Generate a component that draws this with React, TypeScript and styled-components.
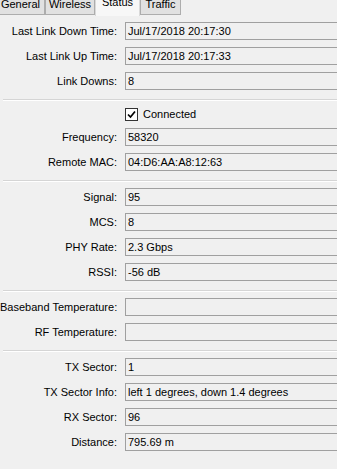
import React from 'react';
import styled, { createGlobalStyle } from 'styled-components';

const GlobalStyle = createGlobalStyle`
  body {
    margin: 0;
    background: #f0f0f0;
  }
`;

const Window = styled.div`
  width: 337px;
  height: 469px;
  overflow: hidden;
  background: #f0f0f0;
  font-family: "Liberation Sans", Arial, sans-serif;
  font-size: 11px;
  color: #000;
`;

const TabStrip = styled.div`
  display: flex;
  align-items: flex-end;
  height: 21px;
  margin: -6px 0 0 -4px;
`;

const Tab = styled.div<{ $w: number; $active?: boolean }>`
  box-sizing: border-box;
  flex: none;
  width: ${(p) => p.$w}px;
  height: ${(p) => (p.$active ? 24 : 21)}px;
  margin-bottom: ${(p) => (p.$active ? -1 : 0)}px;
  line-height: ${(p) => (p.$active ? 18 : 19)}px;
  text-align: center;
  white-space: nowrap;
  background: ${(p) => (p.$active ? '#f7f7f7' : '#e1e1e1')};
  border: 1px solid ${(p) => (p.$active ? '#d9d9d9' : '#adadad')};
  border-bottom: ${(p) => (p.$active ? 'none' : '1px solid #adadad')};
`;

const Panel = styled.div`
  padding-top: 7px;
`;

const Section = styled.div`
  display: flex;
  flex-direction: column;
  gap: 7px;
`;

const Separator = styled.div`
  margin: 9px 0 6px 3px;
  border-top: 1px solid #d5d5d5;
  border-bottom: 1px solid #fff;
`;

const Row = styled.div`
  display: flex;
  align-items: center;
  height: 18px;
`;

const Label = styled.div`
  flex: none;
  width: 117px;
  text-align: right;
  white-space: nowrap;
`;

const Field = styled.div`
  box-sizing: border-box;
  flex: 1;
  height: 18px;
  margin: 0 -20px 0 8px;
  padding-left: 2px;
  line-height: 16px;
  white-space: nowrap;
  border: 1px solid #a0a0a0;
  border-right: none;
`;

const CheckRow = styled.div`
  display: flex;
  align-items: flex-end;
  gap: 5px;
  height: 14px;
  padding-left: 125px;
  line-height: 13px;
`;

const CheckBox = styled.div`
  box-sizing: border-box;
  width: 13px;
  height: 13px;
  background: #fff;
  border: 1px solid #333;
  display: flex;
  align-items: center;
  justify-content: center;
`;

type Item = [string, string];

const sections: Item[][] = [
  [
    ['Last Link Down Time:', 'Jul/17/2018 20:17:30'],
    ['Last Link Up Time:', 'Jul/17/2018 20:17:33'],
    ['Link Downs:', '8'],
  ],
  [
    ['Frequency:', '58320'],
    ['Remote MAC:', '04:D6:AA:A8:12:63'],
  ],
  [
    ['Signal:', '95'],
    ['MCS:', '8'],
    ['PHY Rate:', '2.3 Gbps'],
    ['RSSI:', '-56 dB'],
  ],
  [
    ['Baseband Temperature:', ''],
    ['RF Temperature:', ''],
  ],
  [
    ['TX Sector:', '1'],
    ['TX Sector Info:', 'left 1 degrees, down 1.4 degrees'],
    ['RX Sector:', '96'],
    ['Distance:', '795.69 m'],
  ],
];

const tabs: [string, number][] = [
  ['General', 49],
  ['Wireless', 50],
  ['Status', 45],
  ['Traffic', 41],
];

const renderRows = (items: Item[]) =>
  items.map(([label, value]) => (
    <Row key={label}>
      <Label>{label}</Label>
      <Field>{value}</Field>
    </Row>
  ));

export default function App() {
  return (
    <Window>
      <GlobalStyle />
      <TabStrip>
        {tabs.map(([name, w]) => (
          <Tab key={name} $w={w} $active={name === 'Status'}>
            {name}
          </Tab>
        ))}
      </TabStrip>
      <Panel>
        {sections.map((items, i) => (
          <React.Fragment key={i}>
            {i > 0 && <Separator />}
            <Section>
              {i === 1 && (
                <CheckRow>
                  <CheckBox>
                    <svg width="9" height="9" viewBox="0 0 9 9">
                      <path d="M1 4.5 L3.5 7 L8 1.5" fill="none" stroke="#000" strokeWidth="1.7" />
                    </svg>
                  </CheckBox>
                  <span>Connected</span>
                </CheckRow>
              )}
              {renderRows(items)}
            </Section>
          </React.Fragment>
        ))}
      </Panel>
    </Window>
  );
}
